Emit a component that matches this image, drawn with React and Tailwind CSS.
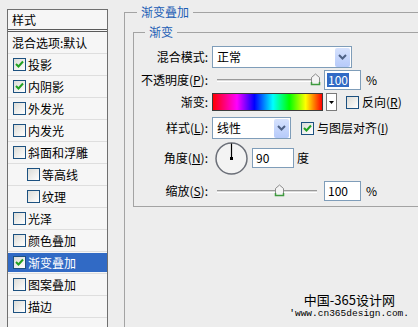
import React from 'react';

const font = "font-['Noto_Sans_CJK_SC','Noto_Sans',sans-serif]";

function CheckBox({ checked }) {
  return (
    <span className="inline-flex w-[13px] h-[13px] shrink-0 items-center justify-center border border-[#1c5180] bg-gradient-to-br from-[#dcdcd7] to-white">
      {checked && (
        <svg width="9" height="9" viewBox="0 0 9 9">
          <path d="M1 4 L3.5 6.5 L8 1.5" fill="none" stroke="#21a121" strokeWidth="2" />
        </svg>
      )}
    </span>
  );
}

const items = [
  { label: '混合选项:默认', plain: true },
  { label: '投影', checked: true },
  { label: '内阴影', checked: true },
  { label: '外发光' },
  { label: '内发光' },
  { label: '斜面和浮雕' },
  { label: '等高线', sub: true },
  { label: '纹理', sub: true },
  { label: '光泽' },
  { label: '颜色叠加' },
  { label: '渐变叠加', checked: true, active: true },
  { label: '图案叠加' },
  { label: '描边' },
];

function StyleList() {
  return (
    <div className="ml-[7px] mt-[9px] w-[101px] h-[330px] border border-[#6f6f6f] bg-[#f6f6f6] text-[12px] text-black shrink-0">
      <div className="h-[22px] flex items-center pl-[4px] border-b-[3px] border-double border-[#5a5a5a]">样式</div>
      {items.map((it) => (
        <div key={it.label} className="h-[22px] border-b border-[#dedede] flex items-center">
          <div
            className={
              'flex-1 h-[19px] flex items-center gap-[2px] ' +
              (it.plain ? 'pl-[4px] ' : it.sub ? 'pl-[19px] ' : 'pl-[5px] ') +
              (it.active ? 'bg-[#316ac5] text-white' : '')
            }
          >
            {!it.plain && <CheckBox checked={it.checked} />}
            <span className="leading-none">{it.label}</span>
          </div>
        </div>
      ))}
    </div>
  );
}

function Arrow() {
  return (
    <span className="w-[15px] h-[19px] mr-[1px] rounded-[2px] bg-gradient-to-b from-[#d6e2fd] to-[#b6cafa] flex items-center justify-center">
      <svg width="9" height="6" viewBox="0 0 9 6">
        <path d="M1 1 L4.5 4.5 L8 1" fill="none" stroke="#4d6185" strokeWidth="2" />
      </svg>
    </span>
  );
}

function Select({ value, width }) {
  return (
    <div className={'h-[22px] border border-[#7f9db9] bg-white flex items-center justify-between ' + width}>
      <span className="pl-[4px]">{value}</span>
      <Arrow />
    </div>
  );
}

function Thumb() {
  return (
    <svg width="11" height="13" viewBox="0 0 11 13">
      <path d="M1.5 11.5 V4.5 L5.5 1 L9.5 4.5 V11.5 Z" fill="#f4f4f4" stroke="#8a8a8a" />
      <path d="M1.5 9 V11.5 H9.5 V9" fill="none" stroke="#3e9a3e" strokeWidth="1.5" />
    </svg>
  );
}

function Slider({ pos }) {
  return (
    <div className="w-[112px] h-[20px] flex items-center pl-[5px]">
      <div className="relative w-[100px] h-[3px] border-t border-[#9a9a9a] border-b border-b-white bg-[#dadada]">
        <span className="absolute top-[-7px]" style={{ left: pos }}>
          <Thumb />
        </span>
      </div>
    </div>
  );
}

function Label({ children }) {
  return <div className="w-[75px] text-right pr-[1px] whitespace-nowrap">{children}</div>;
}

function U({ children }) {
  return <span className="underline">{children}</span>;
}

export default function App() {
  return (
    <div className={'w-[418px] h-[327px] bg-[#ededed] flex overflow-hidden text-[12px] text-black ' + font}>
      <StyleList />
      <div className="flex-1 ml-[16px] mt-[4px]">
        <fieldset className="border border-[#a3a3a3] -mr-[10px] h-[340px] pl-0">
          <legend className="ml-[12px] px-[4px] h-[16px] leading-[16px] text-[#1c5eb5]">渐变叠加</legend>
          <fieldset className="ml-[8px] mt-[4px] border border-[#a3a3a3] pb-[5px]">
            <legend className="ml-[11px] px-[4px] h-[16px] leading-[16px] text-[#1c5eb5]">渐变</legend>
            <div className="flex items-center mt-[6px] h-[22px]">
              <Label>混合模式:</Label>
              <div className="ml-[3px]">
                <Select value="正常" width="w-[140px]" />
              </div>
            </div>
            <div className="flex items-center mt-[2px] h-[20px]">
              <Label>
                不透明度(<U>P</U>):
              </Label>
              <div className="ml-[3px] flex items-center">
                <Slider pos={93} />
                <div className="w-[37px] h-[20px] border border-[#7f9db9] bg-white flex items-center pl-[2px]">
                  <span className="bg-[#316ac5] text-white leading-[14px] px-[1px]">100</span>
                </div>
                <span className="ml-[5px]">%</span>
              </div>
            </div>
            <div className="flex items-center mt-[3px] h-[18px]">
              <Label>渐变:</Label>
              <div className="ml-[3px] flex items-center">
                <div className="w-[111px] h-[18px] border border-[#3c3c3c] bg-[linear-gradient(to_right,#ff0000,#ff00ff_22%,#0000ff_38%,#00ffff_55%,#00ff00_70%,#ffff00_85%,#ff0000)]" />
                <div className="ml-[3px] w-[11px] h-[18px] border border-[#7a7a7a] bg-white flex items-center justify-center">
                  <svg width="5" height="3" viewBox="0 0 5 3">
                    <path d="M0 0 H5 L2.5 3 Z" fill="#000" />
                  </svg>
                </div>
                <span className="ml-[9px] flex items-center gap-[3px]">
                  <CheckBox />
                  <span>
                    反向(<U>R</U>)
                  </span>
                </span>
              </div>
            </div>
            <div className="flex items-center mt-[6px] h-[22px]">
              <Label>
                样式(<U>L</U>):
              </Label>
              <div className="ml-[3px] flex items-center">
                <Select value="线性" width="w-[79px]" />
                <span className="ml-[10px] flex items-center gap-[3px]">
                  <CheckBox checked />
                  <span>
                    与图层对齐(<U>I</U>)
                  </span>
                </span>
              </div>
            </div>
            <div className="flex items-center mt-[3px] h-[32px]">
              <Label>
                角度(<U>N</U>):
              </Label>
              <div className="ml-[6px] flex items-center">
                <svg width="33" height="33" viewBox="0 0 33 33">
                  <circle cx="16.5" cy="16.5" r="15.5" fill="#f3f3f3" stroke="#6b6f78" strokeWidth="1.5" />
                  <line x1="16.5" y1="1.5" x2="16.5" y2="16.5" stroke="#000" strokeWidth="1.2" />
                  <rect x="15" y="15" width="3" height="3" fill="#000" />
                </svg>
                <div className="ml-[4px] w-[42px] h-[20px] border border-[#7f9db9] bg-white flex items-center pl-[3px]">90</div>
                <span className="ml-[3px]">度</span>
              </div>
            </div>
            <div className="flex items-center mt-[7px] h-[20px]">
              <Label>
                缩放(<U>S</U>):
              </Label>
              <div className="ml-[3px] flex items-center">
                <Slider pos={57} />
                <div className="w-[37px] h-[20px] border border-[#7f9db9] bg-white flex items-center pl-[3px]">100</div>
                <span className="ml-[5px]">%</span>
              </div>
            </div>
          </fieldset>
          <div className="mt-[84px] pr-[18px] flex flex-col items-end">
            <div className="text-[13px] leading-[17px] mr-[14px]">中国-365设计网</div>
            <div className="font-['Liberation_Mono',monospace] text-[9.5px] leading-[12px]">'www.cn365design.com.</div>
          </div>
        </fieldset>
      </div>
    </div>
  );
}
